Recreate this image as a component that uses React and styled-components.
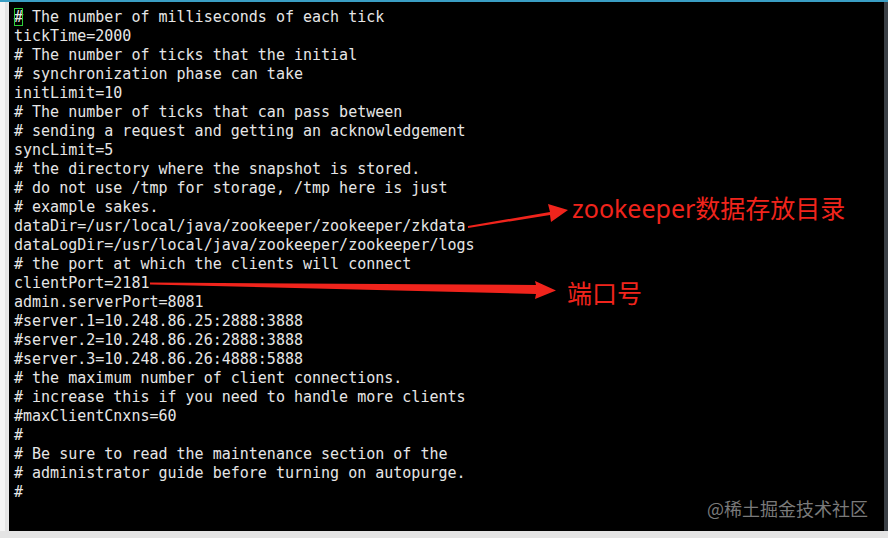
import React from "react";
import styled, { createGlobalStyle } from "styled-components";

const Global = createGlobalStyle`
  html, body { margin: 0; padding: 0; background: #000; }
  body { width: 888px; height: 538px; overflow: hidden; }
`;

const Frame = styled.div`
  position: relative;
  width: 888px;
  height: 538px;
  display: flex;
  flex-direction: column;
  background: #000;
`;

const TopBar = styled.div`
  height: 2px;
  background: #3a9ec4;
  flex: none;
`;

const Middle = styled.div`
  flex: 1;
  display: flex;
  min-height: 0;
`;

const Gutter = styled.div`
  width: 9px;
  flex: none;
  background: linear-gradient(to right, #f4f4f4 0, #f4f4f4 5px, #e2e2e2 5px, #e8e8e8 9px);
`;

const Terminal = styled.div`
  flex: 1;
  background: #000;
  padding: 6px 0 0 5px;
  font-family: "DejaVu Sans Mono", "Liberation Mono", monospace;
  font-size: 15px;
  line-height: 19px;
  color: #e6e6e6;
  white-space: pre;
`;

const RightEdge = styled.div`
  width: 4px;
  flex: none;
  background: #3b4046;
`;

const BottomBar = styled.div`
  height: 7px;
  flex: none;
  background: #e4e4e4;
`;

const Line = styled.div`
  height: 19px;
`;

const Cursor = styled.span`
  outline: 1.5px solid #2fcf3a;
  outline-offset: -1px;
`;

const Note = styled.div`
  position: absolute;
  left: ${(p) => p.$x}px;
  top: ${(p) => p.$y}px;
  color: #f0241c;
  font-family: "Noto Sans", "Noto Sans CJK SC", sans-serif;
  font-size: ${(p) => p.$size}px;
  line-height: 1;
  white-space: nowrap;
`;

const Watermark = styled.div`
  position: absolute;
  right: 20px;
  bottom: 21px;
  color: #7a7a7a;
  font-family: "Noto Sans CJK SC", "Noto Sans", sans-serif;
  font-size: 18px;
  line-height: 1;
  white-space: nowrap;
`;

const Arrows = styled.svg`
  position: absolute;
  left: 0;
  top: 0;
  pointer-events: none;
`;

const lines = [
  "# The number of milliseconds of each tick",
  "tickTime=2000",
  "# The number of ticks that the initial",
  "# synchronization phase can take",
  "initLimit=10",
  "# The number of ticks that can pass between",
  "# sending a request and getting an acknowledgement",
  "syncLimit=5",
  "# the directory where the snapshot is stored.",
  "# do not use /tmp for storage, /tmp here is just",
  "# example sakes.",
  "dataDir=/usr/local/java/zookeeper/zookeeper/zkdata",
  "dataLogDir=/usr/local/java/zookeeper/zookeeper/logs",
  "# the port at which the clients will connect",
  "clientPort=2181",
  "admin.serverPort=8081",
  "#server.1=10.248.86.25:2888:3888",
  "#server.2=10.248.86.26:2888:3888",
  "#server.3=10.248.86.26:4888:5888",
  "# the maximum number of client connections.",
  "# increase this if you need to handle more clients",
  "#maxClientCnxns=60",
  "#",
  "# Be sure to read the maintenance section of the",
  "# administrator guide before turning on autopurge.",
  "#",
];

export default function App() {
  return (
    <Frame>
      <Global />
      <TopBar />
      <Middle>
        <Gutter />
        <Terminal>
          {lines.map((l, i) =>
            i === 0 ? (
              <Line key={i}>
                <Cursor>#</Cursor>
                {l.slice(1)}
              </Line>
            ) : (
              <Line key={i}>{l}</Line>
            )
          )}
        </Terminal>
        <RightEdge />
      </Middle>
      <BottomBar />
      <Arrows width="888" height="538" viewBox="0 0 888 538">
        <polygon points="468,226 550,212 548,204 568,210 551,222 550,215 468,228" fill="#f0241c" />
        <polygon points="150,282.5 536,285 535,281 556,290.5 535,299 536,294 150,284.5" fill="#f0241c" />
      </Arrows>
      <Note $x={572} $y={196} $size={25}>zookeeper数据存放目录</Note>
      <Note $x={567} $y={281} $size={25}>端口号</Note>
      <Watermark>@稀土掘金技术社区</Watermark>
    </Frame>
  );
}
